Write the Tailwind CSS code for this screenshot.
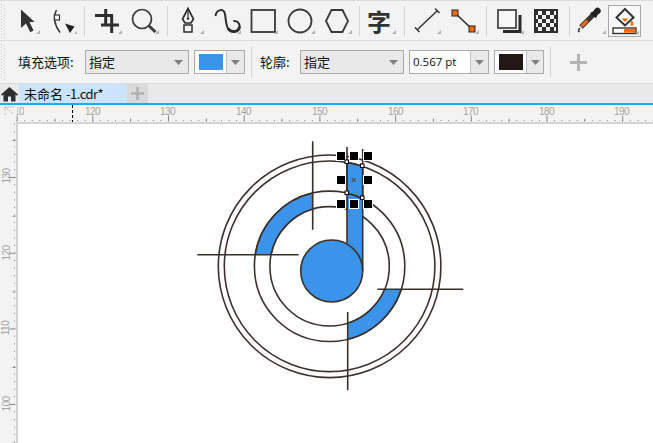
<!DOCTYPE html>
<html lang="zh">
<head>
<meta charset="utf-8">
<script src="https://cdn.jsdelivr.net/npm/@tailwindcss/browser@4"></script>
</head>
<body class="m-0 overflow-hidden bg-white">
<div class="flex flex-col w-[653px] h-[443px] overflow-hidden font-['Noto_Sans_CJK_SC','Noto_Sans',sans-serif] text-[13px] text-[#111]">

  <!-- main toolbar -->
  <div class="flex h-[41px] shrink-0 bg-[#f3f3f3] border-t border-b border-[#dcdcdc] pl-[3px] relative">
    <svg class="absolute left-0 top-[3px]" width="7" height="35"><line x1="1.5" y1="0" x2="1.5" y2="35" stroke="#c4c4c4" stroke-dasharray="1 2"/><line x1="4.5" y1="1.5" x2="4.5" y2="35" stroke="#c4c4c4" stroke-dasharray="1 2"/></svg>
    <!-- arrow -->
    <div class="relative w-[37px] h-full"><svg class="block" width="37" height="39" viewBox="3 1 37 39"><path d="M21 9.500V28l5-4.500 4.300 8.700 3.300-1.600-4.200-8.500h5.200z" fill="#333"/><path d="M40 30v4h-4z" fill="#b4b4b4"/></svg></div>
    <!-- shape -->
    <div class="relative w-[37px] h-full"><svg class="block" width="37" height="39" viewBox="40 1 37 39"><path d="M56.500 10Q51 20 60 32.500" fill="none" stroke="#333" stroke-width="1.400"/><rect x="54.500" y="15" width="5" height="5" fill="#fff" stroke="#333" stroke-width="1.200"/><path d="M65 23.500l9.500 3-4.500 6.500z" fill="#222"/><path d="M78 30v4h-4z" fill="#b4b4b4"/></svg></div>
    <div class="w-px h-[30px] mt-[5px] ml-[7px] bg-[#d4d4d4]"></div>
    <!-- crop -->
    <div class="relative w-[37px] h-full"><svg class="block" width="37" height="39" viewBox="86 1 37 39"><path d="M96 15.500h18M106.700 9v15M102 25h18M112.700 15.500V33" fill="none" stroke="#2e2e2e" stroke-width="3"/><path d="M123 30v4h-4z" fill="#b4b4b4"/></svg></div>
    <!-- zoom -->
    <div class="relative w-[37px] h-full"><svg class="block" width="37" height="39" viewBox="123 1 37 39"><circle cx="143" cy="19" r="9.500" fill="none" stroke="#3a3a3a" stroke-width="1.700"/><path d="M150 26l6.500 6" stroke="#3a3a3a" stroke-width="3"/><path d="M160 30v4h-4z" fill="#b4b4b4"/></svg></div>
    <div class="w-px h-[30px] mt-[5px] ml-[8px] bg-[#d4d4d4]"></div>
    <!-- pen -->
    <div class="relative w-[37px] h-full"><svg class="block" width="37" height="39" viewBox="169 1 37 39"><path d="M189 8.500l-5.500 10.500 2.500 4h6l2.500-4z" fill="none" stroke="#2e2e2e" stroke-width="1.700"/><path d="M189 9v8" stroke="#2e2e2e" stroke-width="1.200"/><circle cx="189" cy="18.500" r="1.300" fill="#2e2e2e"/><rect x="185" y="25" width="8" height="7" fill="none" stroke="#2e2e2e" stroke-width="1.500"/><path d="M205 30v4h-4z" fill="#b4b4b4"/></svg></div>
    <!-- curve -->
    <div class="relative w-[37px] h-full"><svg class="block" width="37" height="39" viewBox="206 1 37 39"><path d="M216.500 16C217.500 9 225 8 226 14c1 5 .5 10 3 14.500 3 4.500 11 4 11.500-2 .3-3.500-2.500-6-6-5.500" fill="none" stroke="#2e2e2e" stroke-width="2"/><path d="M229 28.500c3 4.500 11 4 11.500-2" fill="none" stroke="#2e2e2e" stroke-width="3"/><path d="M242 30v4h-4z" fill="#b4b4b4"/></svg></div>
    <!-- rect -->
    <div class="relative w-[37px] h-full"><svg class="block" width="37" height="39" viewBox="243 1 37 39"><rect x="252.500" y="10" width="23.500" height="22" fill="none" stroke="#3a3a3a" stroke-width="1.800"/><path d="M279 30v4h-4z" fill="#b4b4b4"/></svg></div>
    <!-- circle -->
    <div class="relative w-[37px] h-full"><svg class="block" width="37" height="39" viewBox="280 1 37 39"><circle cx="301" cy="21" r="11.500" fill="none" stroke="#3a3a3a" stroke-width="1.800"/><path d="M316 30v4h-4z" fill="#b4b4b4"/></svg></div>
    <!-- hex -->
    <div class="relative w-[37px] h-full"><svg class="block" width="37" height="39" viewBox="317 1 37 39"><path d="M327 21l5.500-11h11l5.500 11-5.500 11h-11z" fill="none" stroke="#3a3a3a" stroke-width="1.800"/><path d="M353 30v4h-4z" fill="#b4b4b4"/></svg></div>
    <div class="w-px h-[30px] mt-[5px] ml-[6px] bg-[#d4d4d4]"></div>
    <!-- text tool -->
    <div class="relative w-[37px] h-full flex items-center justify-center">
      <span class="text-[24px] leading-none font-bold text-[#333] mt-[1px] ml-[1px]">字</span>
      <svg class="absolute left-0 top-0" width="37" height="39" viewBox="361 1 37 39"><path d="M397 30v4h-4z" fill="#b4b4b4"/></svg>
    </div>
    <div class="w-px h-[30px] mt-[5px] ml-[7px] bg-[#d4d4d4]"></div>
    <!-- line -->
    <div class="relative w-[37px] h-full"><svg class="block" width="37" height="39" viewBox="406 1 37 39"><path d="M418.500 29.500L438 11" stroke="#333" stroke-width="1.500"/><path d="M416 27.500l4.500 4.500M436 8.500l4.500 4.500" stroke="#333" stroke-width="1.500"/><path d="M442 30v4h-4z" fill="#b4b4b4"/></svg></div>
    <!-- connector -->
    <div class="relative w-[37px] h-full"><svg class="block" width="37" height="39" viewBox="443 1 37 39"><path d="M456 13L473 29" stroke="#333" stroke-width="1.700"/><rect x="453" y="10" width="6" height="6" fill="#f26a0f" stroke="#222"/><rect x="470" y="26" width="6" height="6" fill="#f26a0f" stroke="#222"/><path d="M480 30v4h-4z" fill="#b4b4b4"/></svg></div>
    <div class="w-px h-[30px] mt-[5px] ml-[7px] bg-[#d4d4d4]"></div>
    <!-- shadow -->
    <div class="relative w-[37px] h-full"><svg class="block" width="37" height="39" viewBox="488 1 37 39"><path d="M521 15v16.500H504" fill="none" stroke="#2a2a2a" stroke-width="3"/><rect x="499" y="10" width="18" height="18" fill="#f8f8f8" stroke="#4a4a4a" stroke-width="1.800"/><path d="M525 30v4h-4z" fill="#b4b4b4"/></svg></div>
    <!-- transparency -->
    <div class="relative w-[37px] h-full"><svg class="block" width="37" height="39" viewBox="525 1 37 39"><rect x="535" y="9" width="24" height="24" fill="#2e2e2e"/><path d="M539 11h4v4h-4zM547 11h4v4h-4zM543 15h4v4h-4zM551 15h4v4h-4zM539 19h4v4h-4zM547 19h4v4h-4zM543 23h4v4h-4zM551 23h4v4h-4zM539 27h4v4h-4zM547 27h4v4h-4zM555 11h2v4h-2zM555 19h2v4h-2zM555 27h2v4h-2zM537 15h2v4h-2zM537 23h2v4h-2z" fill="#f2f2f2"/></svg></div>
    <div class="w-px h-[30px] mt-[5px] ml-[8px] bg-[#d4d4d4]"></div>
    <!-- eyedropper -->
    <div class="relative w-[37px] h-full"><svg class="block" width="37" height="39" viewBox="570 1 37 39"><path d="M581 27l12-12" stroke="#333" stroke-width="5"/><path d="M581.500 26.500l6-6" stroke="#f26a0f" stroke-width="3"/><path d="M579.500 32l-1-1 1-3" stroke="#333" stroke-width="1.500" fill="none"/><path d="M594 17l-4-4 3-1.500 2-2.500a3 3 0 0 1 5 4l-2.500 2-1.500 3z" fill="#222"/><path d="M606 30v4h-4z" fill="#b4b4b4"/></svg></div>
    <!-- fill (active) -->
    <div class="relative w-[33px] h-[32px] mt-[4px] ml-[1px] bg-[#fafafa] border border-[#a8a8a8]"><svg class="block" width="31" height="30" viewBox="614 6 31 30"><path d="M630 9l8.500 8.500-8.500 8-8.500-8z" fill="#fff" stroke="#333" stroke-width="2"/><path d="M626.500 18.500h7l-3.500 3.500z" fill="#f26a0f"/><path d="M636.500 20c1.500 2 2 3 2 4.300a1.500 1.500 0 0 1-3 0c0-1 .3-2.500 1-4.300z" fill="#f26a0f"/><rect x="618" y="28" width="23" height="5.500" fill="#fff" stroke="#333" stroke-width="1.400"/><rect x="629" y="28.700" width="11.300" height="4" fill="#f26a0f"/><path d="M644 30.500v4h-4z" fill="#b4b4b4"/></svg></div>
  </div>

  <!-- property bar -->
  <div class="flex items-center h-[43px] shrink-0 bg-[#f3f3f3] border-b border-[#dcdcdc] relative">
    <svg class="absolute left-0 top-[3px]" width="7" height="36"><line x1="1.5" y1="0" x2="1.5" y2="36" stroke="#c4c4c4" stroke-dasharray="1 2"/><line x1="4.5" y1="1.5" x2="4.5" y2="36" stroke="#c4c4c4" stroke-dasharray="1 2"/></svg>
    <span class="ml-[18px] w-[67px] leading-none pb-[2px]">填充选项:</span>
    <div class="flex items-center justify-between w-[104px] h-[24px] border border-[#ababab] bg-[#e9e9e9] pl-[3px] pr-[5px]">
      <span class="leading-none pb-[2px]">指定</span>
      <svg width="9" height="5"><path d="M0 0h9l-4.500 5z" fill="#808080"/></svg>
    </div>
    <div class="flex w-[51px] h-[24px] ml-[5px] border border-[#ababab]">
      <div class="w-[31px] bg-white flex items-center justify-center"><div class="w-[24px] h-[16px] bg-[#3b94ea]"></div></div>
      <div class="flex-1 bg-[#e9e9e9] border-l border-[#c4c4c4] flex items-center justify-center"><svg width="9" height="5"><path d="M0 0h9l-4.500 5z" fill="#808080"/></svg></div>
    </div>
    <div class="w-px h-[30px] ml-[6px] bg-[#d4d4d4]"></div>
    <span class="ml-[8px] w-[40px] leading-none pb-[2px]">轮廓:</span>
    <div class="flex items-center justify-between w-[104px] h-[24px] border border-[#ababab] bg-[#e9e9e9] pl-[3px] pr-[5px]">
      <span class="leading-none pb-[2px]">指定</span>
      <svg width="9" height="5"><path d="M0 0h9l-4.500 5z" fill="#808080"/></svg>
    </div>
    <div class="flex w-[80px] h-[24px] ml-[5px] border border-[#ababab]">
      <div class="w-[60px] bg-white flex items-center pl-[3px] pb-[1px] font-['Open_Sans',sans-serif] text-[11.5px] leading-none">0.567 pt</div>
      <div class="flex-1 bg-[#e9e9e9] border-l border-[#c4c4c4] flex items-center justify-center"><svg width="9" height="5"><path d="M0 0h9l-4.500 5z" fill="#808080"/></svg></div>
    </div>
    <div class="flex w-[50px] h-[24px] ml-[5px] border border-[#ababab]">
      <div class="w-[31px] bg-white flex items-center justify-center"><div class="w-[24px] h-[16px] bg-[#231815]"></div></div>
      <div class="flex-1 bg-[#e9e9e9] border-l border-[#c4c4c4] flex items-center justify-center"><svg width="9" height="5"><path d="M0 0h9l-4.500 5z" fill="#808080"/></svg></div>
    </div>
    <div class="w-px h-[30px] ml-[6px] bg-[#d4d4d4]"></div>
    <svg class="ml-[19px]" width="17" height="17"><path d="M8.500 0v17M0 8.500h17" stroke="#b4b4b4" stroke-width="3"/></svg>
  </div>

  <!-- tab bar -->
  <div class="flex h-[21px] shrink-0 bg-[#e9e9e9] border-b-2 border-[#12aeff]">
    <div class="w-[19px] flex items-center justify-center"><svg width="17" height="16" viewBox="0 0 17 16"><path d="M8.500 1L0 8.500l1 1.200 1.500-1.300V15.500h4.500v-5h3v5h4.500V8.400l1.500 1.300 1-1.200z" fill="#2f2f2f"/></svg></div>
    <div class="w-[108px] bg-[#cce4ff] flex items-center pl-[5px] leading-none text-[13px]">未命名<span class="tracking-[-0.5px] ml-[3px]">-1.cdr*</span></div>
    <div class="w-[21px] bg-[#d9d9d9] flex items-center justify-center"><svg width="13" height="13"><path d="M6.500 0v13M0 6.500h13" stroke="#b0b0b0" stroke-width="2.500"/></svg></div>
  </div>

  <!-- horizontal ruler -->
  <div class="relative h-[17px] shrink-0 bg-[#f3f3f3] font-['Liberation_Sans',sans-serif] text-[10px] tracking-[-0.5px] leading-none text-[#a3a3a3]">
    <svg class="absolute left-0 top-0" width="653" height="17" viewBox="0 105 653 17">
      <path d="M16.600 120.500H653" stroke="#8a8a8a" stroke-dasharray="1 6.570"/>
      <path d="M54.400 120H653" stroke="#8a8a8a" stroke-width="3" stroke-dasharray="1 74.700"/>
      <path d="M16.600 118.500H653" stroke="#8a8a8a" stroke-width="6" stroke-dasharray="1 74.700"/>
      <path d="M72.500 105v17" stroke="#000" stroke-dasharray="3 2"/>
      <path d="M5 107l8 7M5 107v4M5 107h4M10 107h4M5 113v3" stroke="#b0b0b0" fill="none" stroke-dasharray="1.500 1"/>
    </svg>
    <span class="absolute left-[17px] top-[2px] w-[7px] overflow-hidden [direction:rtl]">10</span>
    <span class="absolute left-[85px] top-[2px]">120</span>
    <span class="absolute left-[160px] top-[2px]">130</span>
    <span class="absolute left-[236px] top-[2px]">140</span>
    <span class="absolute left-[312px] top-[2px]">150</span>
    <span class="absolute left-[388px] top-[2px]">160</span>
    <span class="absolute left-[463px] top-[2px]">170</span>
    <span class="absolute left-[539px] top-[2px]">180</span>
    <span class="absolute left-[614px] top-[2px]">190</span>
  </div>

  <!-- ruler + canvas -->
  <div class="flex flex-1 min-h-0">
    <div class="relative w-[16px] shrink-0 bg-[#f3f3f3] font-['Liberation_Sans',sans-serif] text-[10px] tracking-[-0.5px] leading-none text-[#a3a3a3]">
      <svg class="absolute left-0 top-0" width="16" height="321" viewBox="0 122 16 321">
        <path d="M14.500 123.700V443" stroke="#8a8a8a" stroke-dasharray="1 6.570"/>
        <path d="M14 140V443" stroke="#8a8a8a" stroke-width="3" stroke-dasharray="1 74.700"/>
        <path d="M12.500 177V443" stroke="#8a8a8a" stroke-width="6" stroke-dasharray="1 74.700"/>
      </svg>
      <span class="absolute left-[-1px] top-[49px] -rotate-90">130</span>
      <span class="absolute left-[-1px] top-[126px] -rotate-90">120</span>
      <span class="absolute left-[-1px] top-[201px] -rotate-90">110</span>
      <span class="absolute left-[-1px] top-[277px] -rotate-90">100</span>
    </div>
    <div class="flex-1 min-w-0 bg-white border-l-2 border-t-2 border-[#d4d4d4] relative">
      <svg class="absolute left-0 top-0" width="635" height="319" viewBox="18 124 635 319" fill="none" stroke="#3a302c" stroke-width="1.600">
        <circle cx="329.600" cy="266.300" r="111.300"/>
        <circle cx="329.600" cy="266.300" r="105.300"/>
        <circle cx="329.600" cy="266.300" r="75.200"/>
        <circle cx="329.600" cy="266.300" r="59.700"/>
        <path d="M255.300 254.700A75.200 75.200 0 0 1 312.700 193V209A59.700 59.700 0 0 0 271 254.700Z" fill="#3b94ea" stroke="none"/>
        <path d="M384.700 289.300H401.200A75.200 75.200 0 0 1 347.700 339.300V323.200A59.700 59.700 0 0 0 384.700 289.300Z" fill="#3b94ea" stroke="none"/>
        <path d="M255.300 254.700A75.200 75.200 0 0 1 312.700 193M271 254.700A59.700 59.700 0 0 1 312.700 209M401.200 289.300A75.200 75.200 0 0 1 347.700 339.300M384.700 289.300A59.700 59.700 0 0 1 347.700 323.200"/>
        <path d="M347 190H362.700V271H347Z" fill="#3b94ea" stroke="none"/>
        <circle cx="331.700" cy="271" r="31" fill="#3b94ea"/>
        <path d="M347 162.400A105.300 105.300 0 0 1 362.700 166.300V198.800A75.200 75.200 0 0 0 347 193.100Z" fill="#3b94ea"/>
        <path d="M312.700 141.300V229.700M197.300 254.700H298.700M377.300 289.300H463.300M347.700 312V390.300M347 147V243M362.700 149V271"/>
        <g fill="#000" stroke="#fff" stroke-width="1">
          <rect x="336.500" y="151.500" width="9" height="9"/><rect x="349.500" y="151.500" width="9" height="9"/><rect x="363.500" y="151.500" width="9" height="9"/>
          <rect x="336.500" y="175.500" width="9" height="9"/><rect x="363.500" y="175.500" width="9" height="9"/>
          <rect x="336.500" y="199.500" width="9" height="9"/><rect x="349.500" y="199.500" width="9" height="9"/><rect x="363.500" y="199.500" width="9" height="9"/>
        </g>
        <path d="M351.700 178l4 4M355.700 178l-4 4" stroke="#555" stroke-width="1.300"/>
        <g fill="#fff" stroke="#000" stroke-width="1">
          <rect x="345" y="160" width="3.500" height="3.500"/><rect x="360.500" y="164" width="3.500" height="3.500"/>
          <rect x="345" y="191" width="3.500" height="3.500"/><rect x="360.500" y="196" width="3.500" height="3.500"/>
        </g>
      </svg>
    </div>
  </div>
</div>
</body>
</html>
